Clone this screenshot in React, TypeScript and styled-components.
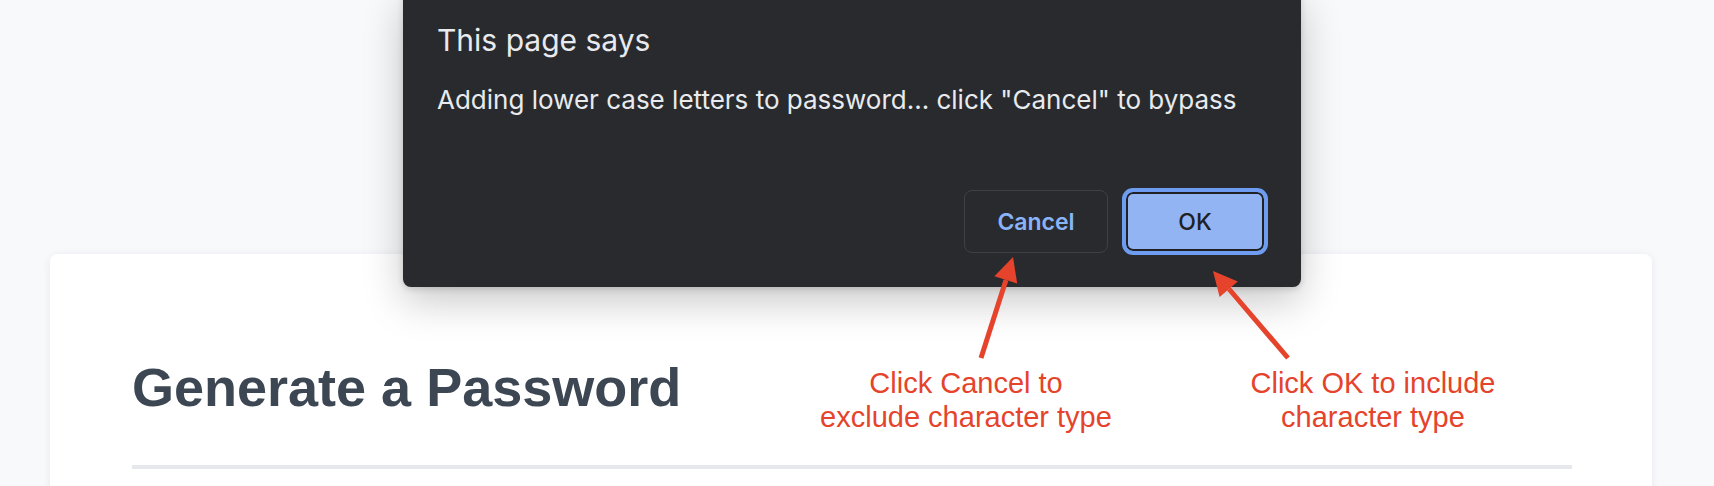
import React from 'react';
import styled, { createGlobalStyle } from 'styled-components';

const GlobalStyle = createGlobalStyle`
  html, body {
    margin: 0;
    padding: 0;
    background: #f8f9fb;
  }
`;

const App: React.FC = () => {
  return (
    <>
      <GlobalStyle />
      <Page>
        <Card>
          <Heading>Generate a Password</Heading>
          <Divider />
        </Card>

        <Dialog>
          <DialogTitle>This page says</DialogTitle>
          <DialogMessage>
            Adding lower case letters to password... click "Cancel" to bypass
          </DialogMessage>
          <ButtonRow>
            <CancelButton>Cancel</CancelButton>
            <OkButton>OK</OkButton>
          </ButtonRow>
        </Dialog>

        <Arrows width="1714" height="486" viewBox="0 0 1714 486">
          <line x1="981" y1="358" x2="1006" y2="280" stroke="#e5432b" strokeWidth="5" />
          <polygon points="1013,257 1017.2,283.5 994.4,276.3" fill="#e5432b" />
          <line x1="1288" y1="358" x2="1229" y2="289" stroke="#e5432b" strokeWidth="5" />
          <polygon points="1213,271 1237.8,281.4 1219.6,297" fill="#e5432b" />
        </Arrows>

        <Note $center={966}>
          Click Cancel to
          <br />
          exclude character type
        </Note>
        <Note $center={1373}>
          Click OK to include
          <br />
          character type
        </Note>
      </Page>
    </>
  );
};

export default App;

const Page = styled.div`
  position: relative;
  height: 486px;
  overflow: hidden;
  box-sizing: border-box;
  padding: 254px 62px 0 50px;
`;

const Card = styled.div`
  background: #ffffff;
  border-radius: 8px;
  box-shadow: 0 1px 8px rgba(20, 30, 50, 0.07);
  padding: 101px 80px 60px 82px;
`;

const Heading = styled.h1`
  margin: 0;
  font-family: 'Liberation Sans', Arial, sans-serif;
  font-weight: 700;
  font-size: 54px;
  line-height: 64px;
  color: #3d4753;
`;

const Divider = styled.div`
  margin-top: 46px;
  height: 4px;
  background: #e7e8eb;
`;

const Dialog = styled.div`
  position: absolute;
  left: 403px;
  top: -10px;
  width: 898px;
  height: 297px;
  box-sizing: border-box;
  display: flex;
  flex-direction: column;
  padding: 32px 33px 32px 34px;
  background: #292a2d;
  border-radius: 8px;
  box-shadow: 0 14px 40px rgba(0, 0, 0, 0.22), 0 2px 6px rgba(0, 0, 0, 0.15);
  font-family: Inter, 'Noto Sans', sans-serif;
  color: #e8eaed;
`;

const DialogTitle = styled.div`
  font-size: 30px;
  line-height: 36px;
`;

const DialogMessage = styled.div`
  margin-top: 26px;
  font-size: 26px;
  line-height: 31px;
`;

const ButtonRow = styled.div`
  margin-top: auto;
  display: flex;
  justify-content: flex-end;
  align-items: center;
  gap: 14px;
`;

const CancelButton = styled.button`
  width: 144px;
  height: 63px;
  border: 1px solid #3f4043;
  border-radius: 8px;
  background: transparent;
  color: #8ab4f8;
  font-family: Inter, 'Noto Sans', sans-serif;
  font-weight: 600;
  font-size: 23px;
`;

const OkButton = styled.button`
  width: 146px;
  height: 67px;
  box-sizing: border-box;
  border: 4px solid #6d9cf0;
  border-radius: 11px;
  background: #93b4f3;
  box-shadow: inset 0 0 0 2px #202124;
  color: #202124;
  font-family: Inter, 'Noto Sans', sans-serif;
  font-weight: 500;
  font-size: 23px;
`;

const Arrows = styled.svg`
  position: absolute;
  left: 0;
  top: 0;
  pointer-events: none;
`;

const Note = styled.div<{ $center: number }>`
  position: absolute;
  top: 366px;
  left: ${(p) => p.$center - 200}px;
  width: 400px;
  text-align: center;
  font-family: 'Liberation Sans', Arial, sans-serif;
  font-size: 29px;
  line-height: 34px;
  color: #e5432b;
`;
